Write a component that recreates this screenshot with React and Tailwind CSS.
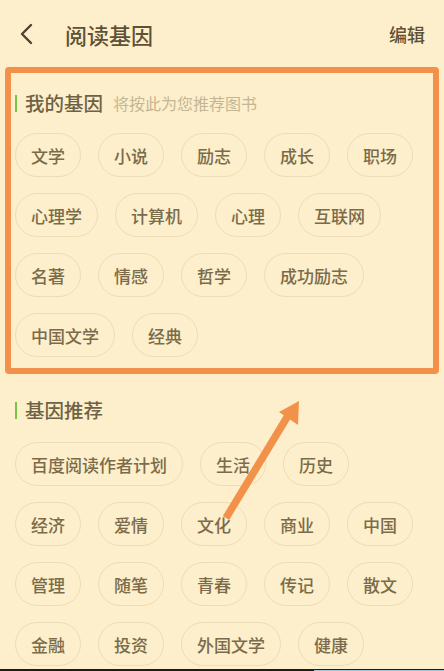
import React from 'react';

const myGenes = ['文学', '小说', '励志', '成长', '职场', '心理学', '计算机', '心理', '互联网', '名著', '情感', '哲学', '成功励志', '中国文学', '经典'];

const recommended = ['百度阅读作者计划', '生活', '历史', '经济', '爱情', '文化', '商业', '中国', '管理', '随笔', '青春', '传记', '散文', '金融', '投资', '外国文学', '健康'];

const Tag = ({ label }) => (
  <div className="h-[44px] px-[15px] flex items-center justify-center rounded-full border border-[#eddcb5] text-[17px] font-medium leading-none text-[#7b6b4a]">
    {label}
  </div>
);

const SectionTitle = ({ title, hint }) => (
  <div className="flex items-center h-[22px]">
    <div className="w-[2px] h-[17px] bg-[#78c445] mr-[8px]" />
    <span className="text-[19.5px] font-medium leading-none text-[#6f6244]">{title}</span>
    {hint && <span className="ml-[10px] text-[16px] leading-none text-[#c4b693]">{hint}</span>}
  </div>
);

export default function App() {
  return (
    <div
      className="relative w-full h-[671px] overflow-hidden bg-[#fdefcb]"
      style={{ fontFamily: '"Noto Sans CJK SC", "Noto Sans", sans-serif' }}
    >
      {/* Header */}
      <div className="h-[67px] flex items-center pl-[18px] pr-[19px]">
        <svg width="18" height="22" viewBox="0 0 18 22" className="shrink-0">
          <polyline points="13,2 4,11 13,20" fill="none" stroke="#4d4230" strokeWidth="2.4" strokeLinecap="round" strokeLinejoin="round" />
        </svg>
        <span className="ml-[29px] text-[22px] font-medium leading-none text-[#5e5137]">阅读基因</span>
        <span className="ml-auto text-[18px] font-medium leading-none text-[#5e5137]">编辑</span>
      </div>

      {/* My genes box */}
      <div className="mx-[5px] border-[6px] border-[#f2924a] rounded-[4px] pl-[4px] pr-[2px] pt-[19px] pb-[11px]">
        <SectionTitle title="我的基因" hint="将按此为您推荐图书" />
        <div className="mt-[19px] flex flex-wrap gap-x-[17px] gap-y-[16px]">
          {myGenes.map((g) => (
            <Tag key={g} label={g} />
          ))}
        </div>
      </div>

      {/* Recommended */}
      <div className="px-[15px] mt-[25px]">
        <SectionTitle title="基因推荐" />
        <div className="mt-[21px] flex flex-wrap gap-x-[17px] gap-y-[16px]">
          {recommended.map((g) => (
            <Tag key={g} label={g} />
          ))}
        </div>
      </div>

      {/* Bottom edge */}
      <div className="absolute left-0 right-0 bottom-0 h-[2px] flex">
        <div className="w-[314px] bg-[#1c1c1c]" />
        <div className="flex-1 bg-[#9fc6e4] border-t border-[#1c1c1c]" />
      </div>

      {/* Annotation arrow */}
      <svg className="absolute left-0 top-0 pointer-events-none" width="444" height="671" viewBox="0 0 444 671">
        <line x1="226" y1="518" x2="289" y2="414" stroke="#f2924a" strokeWidth="7.5" />
        <polygon points="299,401 279,412 298,425" fill="#f2924a" />
      </svg>
    </div>
  );
}
